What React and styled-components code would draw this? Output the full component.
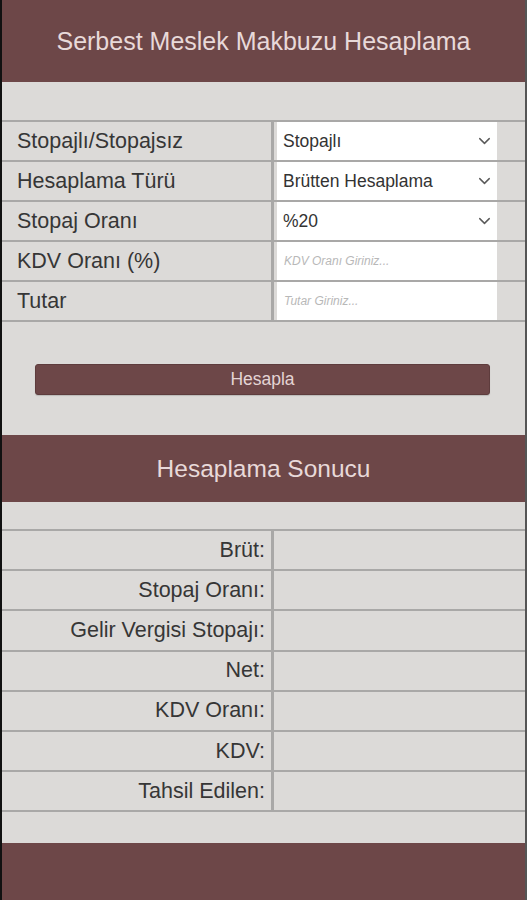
import React from "react";
import styled, { createGlobalStyle } from "styled-components";
import { ChevronDown } from "lucide-react";

const maroon = "#6d4748";
const paper = "#dcdad8";
const rule = "#a9a8a7";

const GlobalStyle = createGlobalStyle`
  html, body {
    margin: 0;
    padding: 0;
    background: ${paper};
  }
  body {
    font-family: "Liberation Sans", Arial, sans-serif;
  }
`;

const Page = styled.div`
  min-height: 900px;
  display: flex;
  flex-direction: column;
  background: ${paper};
  border-left: 2px solid #111;
  border-right: 2px solid #555;
  box-sizing: border-box;
`;

const Band = styled.header`
  height: ${(p) => p.$height}px;
  flex-shrink: 0;
  background: ${maroon};
  display: flex;
  align-items: center;
  justify-content: center;
  color: #e8d9d9;
  font-size: ${(p) => p.$size}px;
  margin-top: ${(p) => p.$top || 0}px;
`;

const Footer = styled.footer`
  flex: 1;
  background: ${maroon};
  margin-top: 31px;
  min-height: 57px;
`;

const Table = styled.div`
  margin-top: ${(p) => p.$top}px;
  border-top: 2px solid ${rule};
`;

const Row = styled.div`
  display: grid;
  grid-template-columns: 272px 1fr;
  height: ${(p) => p.$h}px;
  border-bottom: 2px solid ${rule};
  box-sizing: border-box;
`;

const Label = styled.div`
  display: flex;
  align-items: center;
  justify-content: ${(p) => (p.$right ? "flex-end" : "flex-start")};
  padding: ${(p) => (p.$right ? "0 6px 0 0" : "0 0 0 15px")};
  border-right: 3px solid ${rule};
  font-size: 21.5px;
  color: #363636;
  white-space: nowrap;
`;

const Value = styled.div`
  display: flex;
  align-items: stretch;
  padding: 0 0 0 3px;
`;

const Field = styled.div`
  position: relative;
  width: 220px;
  background: #fff;
  display: flex;
`;

const Select = styled.select`
  appearance: none;
  width: 100%;
  border: none;
  background: transparent;
  font-family: "Liberation Sans", Arial, sans-serif;
  font-size: 17.5px;
  color: #333;
  padding: 0 0 0 6px;
  outline: none;
`;

const Chevron = styled.span`
  position: absolute;
  right: 3px;
  top: 50%;
  transform: translateY(-50%);
  display: flex;
  color: #5a5a5a;
  pointer-events: none;
`;

const Input = styled.input`
  width: 100%;
  border: none;
  background: transparent;
  padding: 0 0 0 7px;
  font-family: "Liberation Sans", Arial, sans-serif;
  font-size: 12px;
  outline: none;

  &::placeholder {
    font-style: italic;
    color: #b8b8b8;
  }
`;

const ButtonArea = styled.div`
  padding: 42px 35px 0 33px;
`;

const Button = styled.button`
  width: 100%;
  height: 31px;
  border: 1px solid #5e3c3d;
  border-radius: 3px;
  background: ${maroon};
  color: #e4d4d4;
  font-family: "Liberation Sans", Arial, sans-serif;
  font-size: 17.5px;
  box-shadow: 0 1px 1px rgba(0, 0, 0, 0.15);
`;

const formRows = [
  { label: "Stopajlı/Stopajsız", select: ["Stopajlı", "Stopajsız"] },
  { label: "Hesaplama Türü", select: ["Brütten Hesaplama", "Netten Hesaplama"] },
  { label: "Stopaj Oranı", select: ["%20", "%17", "%15"] },
  { label: "KDV Oranı (%)", placeholder: "KDV Oranı Giriniz..." },
  { label: "Tutar", placeholder: "Tutar Giriniz..." },
];

const resultRows = [
  "Brüt:",
  "Stopaj Oranı:",
  "Gelir Vergisi Stopajı:",
  "Net:",
  "KDV Oranı:",
  "KDV:",
  "Tahsil Edilen:",
];

const App = () => {
  return (
    <>
      <GlobalStyle />
      <Page>
        <Band $height={82} $size={25}>
          Serbest Meslek Makbuzu Hesaplama
        </Band>

        <Table $top={38}>
          {formRows.map((r) => (
            <Row key={r.label} $h={40}>
              <Label>{r.label}</Label>
              <Value>
                <Field>
                  {r.select ? (
                    <>
                      <Select defaultValue={r.select[0]}>
                        {r.select.map((o) => (
                          <option key={o}>{o}</option>
                        ))}
                      </Select>
                      <Chevron>
                        <ChevronDown size={19} strokeWidth={1.8} />
                      </Chevron>
                    </>
                  ) : (
                    <Input placeholder={r.placeholder} />
                  )}
                </Field>
              </Value>
            </Row>
          ))}
        </Table>

        <ButtonArea>
          <Button type="button">Hesapla</Button>
        </ButtonArea>

        <Band $height={67} $size={24.5} $top={40}>
          Hesaplama Sonucu
        </Band>

        <Table $top={27}>
          {resultRows.map((r) => (
            <Row key={r} $h={40.2}>
              <Label $right>{r}</Label>
              <Value />
            </Row>
          ))}
        </Table>

        <Footer />
      </Page>
    </>
  );
};

export default App;
